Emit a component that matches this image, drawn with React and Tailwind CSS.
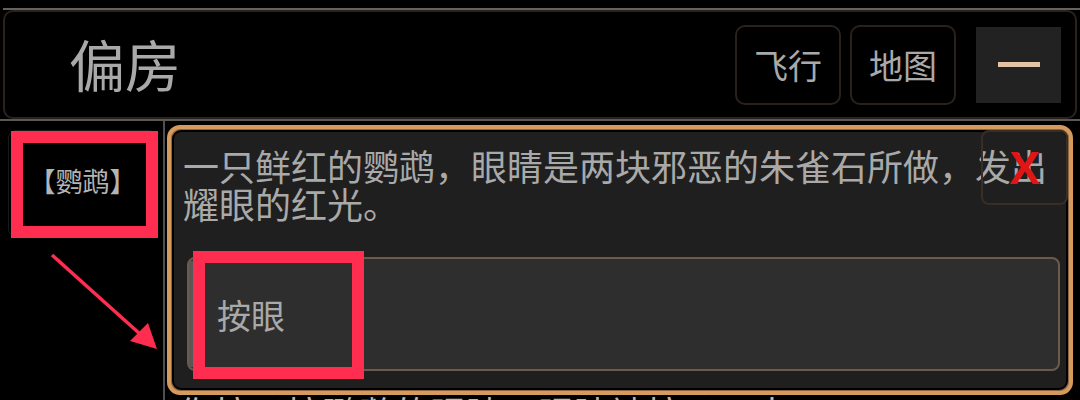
import { useState } from 'react';

const CJK = { fontFamily: '"Noto Sans CJK SC", "Noto Sans", sans-serif' };

const NavButton = ({ label }) => (
  <button className="w-[106px] h-[80px] border-2 border-[#2a211c] rounded-[10px] text-[34px] text-[#a9a9a9] flex items-center justify-center">
    {label}
  </button>
);

const App = () => {
  const [open, setOpen] = useState(true);

  return (
    <div style={CJK} className="relative w-[1080px] h-[400px] bg-black overflow-hidden flex flex-col">
      <div className="h-[8px]" />
      <div className="h-[2px] ml-[3px] bg-[#67625d]" />

      {/* Room header */}
      <header className="mx-[3px] h-[109px] border-2 border-[#2a221d] rounded-[10px] flex items-center justify-between pl-[64px] pr-[14px]">
        <h1 className="text-[56px] leading-none text-[#a9a9a9] pb-[4px]">偏房</h1>
        <div className="flex items-center gap-[9px]">
          <NavButton label="飞行" />
          <NavButton label="地图" />
          <button className="ml-[11px] w-[85px] h-[76px] bg-[#222222] flex items-center justify-center">
            <span className="block w-[42px] h-[5px] bg-[#e3c3a3]" />
          </button>
        </div>
      </header>
      <div className="h-[2px] bg-[#5c5955]" />

      <div className="flex flex-1 min-h-0">
        {/* Objects in the room */}
        <aside className="w-[165px] border-r-2 border-[#4f4f4f] pt-[9px] pl-[8px] pr-[6px]">
          <button className="relative w-[149px] h-[107px] border border-[#1a1a1a] rounded-[8px] text-[27px] text-[#b4b4b4] flex items-center justify-center pb-[4px]">
            【鹦鹉】
            <span className="absolute left-[2px] top-0 w-[147px] h-[107px] border-[12px] border-[#ff2d4f]" />
          </button>
        </aside>

        <main className="flex-1 pl-[2px] pt-[4px] pr-[7px] flex flex-col">
          {open && (
            <div className="relative border-4 border-[#d49b5d] rounded-[13px] bg-[#8c6444] p-px">
              <div className="border-[2px] border-black rounded-[9px] bg-[#1f1f1f] pl-[9px] pr-[5px] pt-[14px] pb-[17px]">
                <p className="text-[36px] leading-[38px] text-[#a9a9a9] pr-[14px]">
                  一只鲜红的鹦鹉，眼睛是两块邪恶的朱雀石所做，发出耀眼的红光。
                </p>
                <button className="relative mt-[35px] ml-[4px] w-[873px] h-[114px] border-2 border-[#6e5a48] rounded-[8px] bg-[#2e2e2e] flex items-center text-[34px] text-[#a9a9a9]">
                  <span className="absolute left-0 top-[2px] bottom-[2px] w-[8px] bg-[#585858]" />
                  <span className="pl-[28px]">按眼</span>
                  <span className="absolute left-[4px] top-[-8px] w-[171px] h-[128px] border-[12px] border-[#ff2d4f]" />
                </button>
              </div>
              <button
                onClick={() => setOpen(false)}
                className="absolute top-[1px] right-[1px] w-[87px] h-[75px] border-2 border-[#3a2d24] rounded-[8px] flex items-center justify-center"
              >
                <span className="text-[46px] leading-none font-bold text-[#e01515]" style={{ fontFamily: '"Liberation Sans", sans-serif' }}>X</span>
              </button>
            </div>
          )}
          <p className="pl-[11px] text-[36px] leading-[35px] text-[#b8b8b8] whitespace-nowrap">
            你按了按鹦鹉的眼睛，眼睛被按了下去……
          </p>
        </main>
      </div>

      {/* Pointer arrow */}
      <svg className="absolute left-0 top-0 pointer-events-none" width="1080" height="400">
        <line x1="52" y1="255" x2="140" y2="334" stroke="#ff2d4f" strokeWidth="3.5" />
        <polygon points="157,349 130,341 148,323" fill="#ff2d4f" />
      </svg>
    </div>
  );
};

export default App;
